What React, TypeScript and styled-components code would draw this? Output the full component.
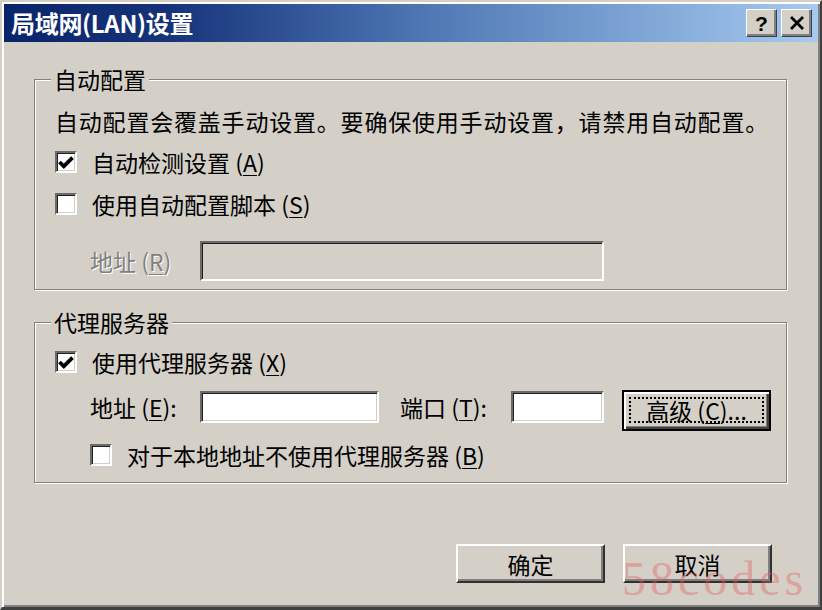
import React from "react";
import styled, { createGlobalStyle } from "styled-components";

const UI = `"Noto Sans CJK SC", "Noto Sans", sans-serif`;

const GlobalStyle = createGlobalStyle`
  * { box-sizing: border-box; }
  html, body { margin: 0; padding: 0; background: #d4d0c8; }
  body { width: 822px; height: 610px; overflow: hidden; }
`;

const Window = styled.div`
  position: relative;
  width: 822px;
  height: 610px;
  display: flex;
  flex-direction: column;
  padding: 2px;
  background: #d4d0c8;
  border-style: solid;
  border-width: 2px 2px 3px 2px;
  border-color: #d4d0c8 #404040 #404040 #d4d0c8;
  box-shadow: inset 2px 2px 0 #ffffff, inset -2px -2px 0 #808080;
  font-family: ${UI};
  color: #000;
  overflow: hidden;
`;

const TitleBar = styled.div`
  flex: none;
  height: 38px;
  display: flex;
  align-items: center;
  justify-content: space-between;
  padding: 0 6px 0 7px;
  background: linear-gradient(to right, #0a246a 0%, #16337a 20%, #4f78b4 52%, #a6caf0 100%);
`;

const TitleText = styled.span`
  font-family: ${UI};
  font-size: 24px;
  font-weight: 700;
  color: #ffffff;
  letter-spacing: -0.3px;
  line-height: 38px;
  white-space: nowrap;
`;

const CaptionButtons = styled.div`
  display: flex;
  gap: 4px;
  align-items: center;
`;

const CaptionButton = styled.button`
  width: 31px;
  height: 28px;
  padding: 0;
  display: flex;
  align-items: center;
  justify-content: center;
  background: #d4d0c8;
  border: 1px solid;
  border-color: #ffffff #404040 #404040 #ffffff;
  box-shadow: inset -2px -2px 0 #808080;
  font-family: "Liberation Sans", Arial, sans-serif;
  font-size: 21px;
  font-weight: 700;
  color: #000;
  line-height: 1;
`;

const Body = styled.div`
  flex: 1;
  display: flex;
  flex-direction: column;
  padding: 23px 31px 0 30px;
`;

const Group = styled.fieldset<{ $mt?: number }>`
  margin: ${(p) => p.$mt ?? 0}px 0 0 0;
  padding: 0;
  min-width: 0;
  border: 1px solid #808080;
  box-shadow: 1px 1px 0 #ffffff, inset 1px 1px 0 #ffffff;
`;

const Legend = styled.legend`
  margin-left: 16px;
  padding: 0 3px;
  font-size: 23px;
  line-height: 28px;
  background: #d4d0c8;
  white-space: nowrap;
`;

const GroupBody = styled.div<{ $pt: number; $pb: number }>`
  display: flex;
  flex-direction: column;
  padding: ${(p) => p.$pt}px 0 ${(p) => p.$pb}px 20px;
`;

const Description = styled.p`
  margin: 0;
  font-size: 23px;
  line-height: 28px;
  letter-spacing: 0.8px;
  white-space: nowrap;
`;

const CheckRow = styled.label<{ $mt?: number; $indent?: number }>`
  display: flex;
  align-items: center;
  height: 42px;
  margin: ${(p) => p.$mt ?? 0}px 0 0 ${(p) => p.$indent ?? 0}px;
`;

const CheckBox = styled.span`
  flex: none;
  width: 22px;
  height: 22px;
  display: flex;
  align-items: center;
  justify-content: center;
  background: #ffffff;
  border: 2px solid;
  border-color: #6a6a6a #ffffff #ffffff #6a6a6a;
  box-shadow: inset 1px 1px 0 #202020, inset -1px -1px 0 #d4d0c8;
`;

const CheckText = styled.span`
  margin-left: 15px;
  font-size: 23px;
  line-height: 28px;
  white-space: nowrap;
`;

const Key = styled.span`
  text-decoration: underline;
  text-decoration-thickness: 1px;
  text-underline-offset: 3px;
`;

const FieldRow = styled.div<{ $mt?: number }>`
  display: flex;
  align-items: flex-start;
  margin: ${(p) => p.$mt ?? 0}px 0 0 35px;
`;

const FieldLabel = styled.span<{ $w: number; $h: number; $mt?: number; $ml?: number; $disabled?: boolean }>`
  flex: none;
  width: ${(p) => p.$w}px;
  margin: ${(p) => p.$mt ?? 0}px 0 0 ${(p) => p.$ml ?? 0}px;
  font-size: 23px;
  line-height: ${(p) => p.$h}px;
  white-space: nowrap;
  color: ${(p) => (p.$disabled ? "#808080" : "#000000")};
  text-shadow: ${(p) => (p.$disabled ? "1px 1px 0 #ffffff" : "none")};
`;

const TextBox = styled.input<{ $w: number; $h: number; $mt?: number; $disabled?: boolean }>`
  flex: none;
  width: ${(p) => p.$w}px;
  height: ${(p) => p.$h}px;
  margin: ${(p) => p.$mt ?? 0}px 0 0 0;
  padding: 0 4px;
  font-family: ${UI};
  font-size: 20px;
  outline: none;
  background: ${(p) => (p.$disabled ? "#d4d0c8" : "#ffffff")};
  border: 2px solid;
  border-color: #6a6a6a #ffffff #ffffff #6a6a6a;
  box-shadow: inset 1px 1px 0 #202020, inset -1px -1px 0 #d4d0c8;
`;

const PushButton = styled.button`
  flex: none;
  width: 149px;
  height: 39px;
  padding: 0;
  font-family: ${UI};
  font-size: 23px;
  color: #000;
  background: #d4d0c8;
  border: 2px solid;
  border-color: #ffffff #303030 #303030 #ffffff;
  box-shadow: inset -2px -2px 0 #808080;
`;

const DefaultButton = styled.button`
  flex: none;
  width: 149px;
  height: 41px;
  margin-left: 18px;
  padding: 5px 5px 6px 5px;
  font-family: ${UI};
  font-size: 23px;
  color: #000;
  background: #d4d0c8;
  border: 2px solid #000000;
  box-shadow: inset 2px 2px 0 #ffffff, inset -2px -2px 0 #404040, inset -3px -3px 0 #808080;
`;

const FocusRing = styled.span`
  display: flex;
  align-items: center;
  justify-content: center;
  width: 100%;
  height: 100%;
  border: 2px dotted #000000;
  line-height: 1;
  white-space: nowrap;
`;

const Footer = styled.div`
  display: flex;
  justify-content: flex-end;
  gap: 18px;
  margin-top: 61px;
  padding-right: 15px;
`;

const Watermark = styled.span`
  position: absolute;
  left: 620px;
  top: 553px;
  font-family: "Liberation Serif", "Times New Roman", serif;
  font-size: 48px;
  line-height: 1;
  letter-spacing: 4px;
  color: rgba(228, 90, 90, 0.4);
  pointer-events: none;
  white-space: nowrap;
`;

const CheckMark = () => (
  <svg width="16" height="15" viewBox="0 0 16 15" aria-hidden="true">
    <polyline points="1.5,7 5.8,11.3 14.5,2.6" fill="none" stroke="#000" strokeWidth="3.8" />
  </svg>
);

const CloseGlyph = () => (
  <svg width="16" height="14" viewBox="0 0 16 14" aria-hidden="true">
    <path d="M2 1 L14 13 M14 1 L2 13" stroke="#000" strokeWidth="2.8" fill="none" />
  </svg>
);

const Check = ({ checked }: { checked?: boolean }) => (
  <CheckBox>{checked ? <CheckMark /> : null}</CheckBox>
);

export default function App() {
  return (
    <>
      <GlobalStyle />
      <Window>
        <TitleBar>
          <TitleText>局域网(LAN)设置</TitleText>
          <CaptionButtons>
            <CaptionButton>?</CaptionButton>
            <CaptionButton>
              <CloseGlyph />
            </CaptionButton>
          </CaptionButtons>
        </TitleBar>
        <Body>
          <Group>
            <Legend>自动配置</Legend>
            <GroupBody $pt={14} $pb={8}>
              <Description>自动配置会覆盖手动设置。要确保使用手动设置，请禁用自动配置。</Description>
              <CheckRow $mt={6}>
                <Check checked />
                <CheckText>
                  自动检测设置 (<Key>A</Key>)
                </CheckText>
              </CheckRow>
              <CheckRow>
                <Check />
                <CheckText>
                  使用自动配置脚本 (<Key>S</Key>)
                </CheckText>
              </CheckRow>
              <FieldRow $mt={16}>
                <FieldLabel $w={110} $h={40} $disabled>
                  地址 (<Key>R</Key>)
                </FieldLabel>
                <TextBox $w={404} $h={40} $disabled readOnly />
              </FieldRow>
            </GroupBody>
          </Group>
          <Group $mt={18}>
            <Legend>代理服务器</Legend>
            <GroupBody $pt={5} $pb={6}>
              <CheckRow>
                <Check checked />
                <CheckText>
                  使用代理服务器 (<Key>X</Key>)
                </CheckText>
              </CheckRow>
              <FieldRow $mt={7}>
                <FieldLabel $w={110} $h={32} $mt={1}>
                  地址 (<Key>E</Key>):
                </FieldLabel>
                <TextBox $w={179} $h={32} $mt={1} readOnly />
                <FieldLabel $w={111} $h={32} $mt={1} $ml={21}>
                  端口 (<Key>T</Key>):
                </FieldLabel>
                <TextBox $w={93} $h={32} $mt={1} readOnly />
                <DefaultButton>
                  <FocusRing>
                    高级 (<Key>C</Key>)...
                  </FocusRing>
                </DefaultButton>
              </FieldRow>
              <CheckRow $mt={3} $indent={35}>
                <Check />
                <CheckText>
                  对于本地地址不使用代理服务器 (<Key>B</Key>)
                </CheckText>
              </CheckRow>
            </GroupBody>
          </Group>
          <Footer>
            <PushButton>确定</PushButton>
            <PushButton>取消</PushButton>
          </Footer>
        </Body>
        <Watermark>58codes</Watermark>
      </Window>
    </>
  );
}
